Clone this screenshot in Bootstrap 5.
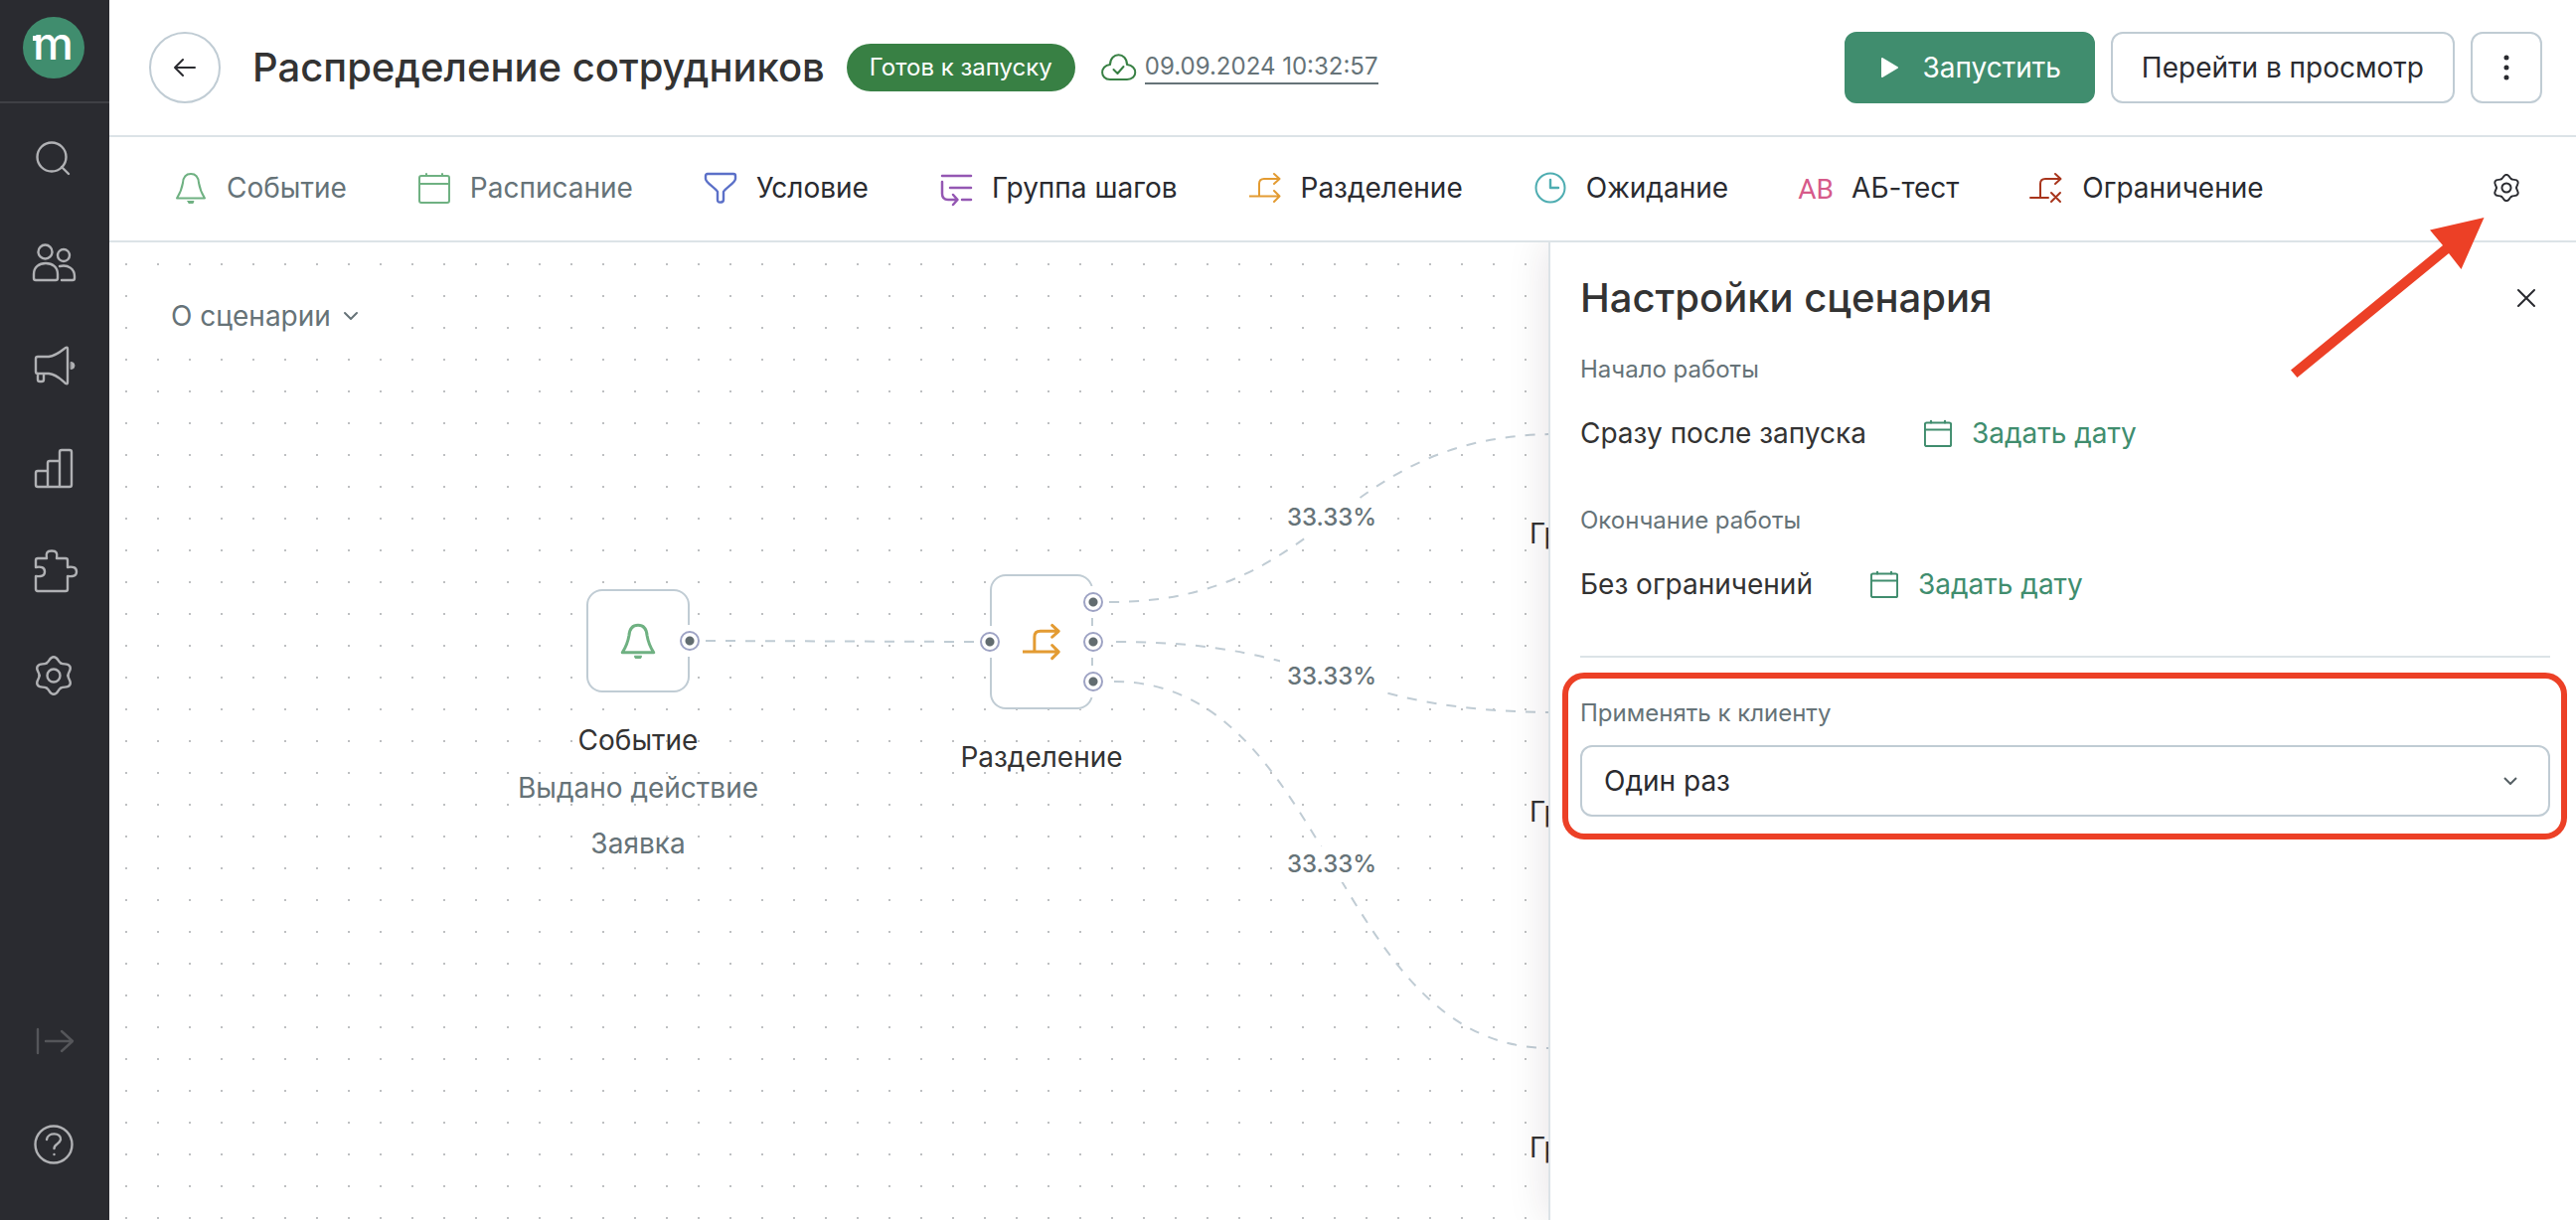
<!DOCTYPE html>
<html lang="ru">
<head>
<meta charset="utf-8">
<meta name="viewport" content="width=device-width, initial-scale=1">
<title>Распределение сотрудников</title>
<link href="https://cdn.jsdelivr.net/npm/bootstrap@5.3.0/dist/css/bootstrap.min.css" rel="stylesheet">
<style>
  :root { --ink:#2a2b30; --muted:#667378; --line:#dce3e7; --edge:#c0ccd4; --brand:#408d6e; --alert:#ec4026; }
  body { font-family: Inter, "Noto Sans", sans-serif; font-size: 28px; line-height: 40px; color: #333; background: #fff; }
  svg { fill: none; stroke: currentColor; stroke-width: 2; stroke-linecap: round; stroke-linejoin: round; overflow: visible; flex: none; display: block; }
  .rail { width: 110px; background: var(--ink); color: #b0b1b4; }
  .rail svg { stroke-width: 2.4; }
  .rail-logo { height: 104px; border-bottom: 2px solid #3f4045; padding: 16px 22px; }
  .rail-link { height: 104px; color: inherit; padding-right: 2px; }
  .rail-off { color: #55565a; }
  .rail-foot { padding-bottom: 24px; }
  .topbar { height: 138px; padding: 0 34px 0 40px; border-bottom: 2px solid var(--line); }
  .heading { font-size: 40px; line-height: 48px; font-weight: 500; margin: 0; }
  .tool { border: 0; background: none; padding: 0; border-radius: 12px; color: var(--ink); white-space: nowrap; }
  .btn-back, .btn-line, .btn-run { height: 72px; border: 2px solid var(--edge); border-radius: 12px; background: #fff; color: var(--ink); white-space: nowrap; }
  .btn-back { width: 72px; border-radius: 50%; margin-right: 32px; }
  .btn-line { padding: 0 29px; }
  .btn-more { width: 72px; padding: 0; }
  .btn-run { background: var(--brand); border-color: var(--brand); color: #fff; padding: 0 32px 0 34px; gap: 22px; }
  .state { background: #388044; color: #fff; font-size: 24px; line-height: 32px; padding: 8px 23px; border-radius: 24px; margin: 0 26px 0 22px; white-space: nowrap; }
  .saved { font-size: 24px; line-height: 32px; color: var(--muted); border-bottom: 2px solid var(--muted); text-decoration: none; white-space: nowrap; }
  .steps { height: 106px; padding: 0 56px 2px 66px; gap: 72px; border-bottom: 2px solid var(--line); }
  .steps .tool { gap: 20px; }
  .steps .tool.idle, .about { color: var(--muted); }
  .board { overflow: hidden; background: radial-gradient(circle at 1px 1px, #bec0c2 1px, transparent 1px) 16px 21px / 32px 32px; }
  .about { background: #fff; margin: 40px 0 0 32px; padding: 14px 30px; gap: 14px; border: 0; }
  .wires { left: 0; top: 0; color: var(--edge); stroke-dasharray: 10 10; stroke-linecap: butt; }
  .node { width: 300px; text-align: center; color: #333; }
  .node-box { width: 104px; height: 104px; margin: 0 auto 28px; box-shadow: inset 0 0 0 2px var(--edge); border-radius: 16px; background: #fff; }
  .node-tall { height: 136px; }
  .port { width: 32px; height: 32px; background: #fff; }
  .port::before { content: ""; width: 20px; height: 20px; border: 2px solid #9ea3c4; border-radius: 50%; background: radial-gradient(circle, #626c70 4px, transparent 5px); }
  .share { width: 104px; line-height: 36px; font-size: 24px; font-weight: 500; text-align: center; background: #fff; color: var(--muted); }
  .settings { width: 1034px; border-left: 2px solid var(--line); padding: 32px 26px 0 30px; background: #fff; box-shadow: 0 0 40px rgba(40,20,30,.12); clip-path: inset(0 0 0 -60px); }
  .hint { font-size: 24px; line-height: 32px; color: var(--muted); display: block; }
  .setting { margin-top: 28px; margin-bottom: 52px; gap: 58px; }
  .setting .tool { color: var(--brand); gap: 20px; }
  .rule { height: 2px; background: var(--line); margin-bottom: 40px; }
  .pick { height: 72px; border: 2px solid var(--edge); border-radius: 12px; font-size: 28px; line-height: 40px; color: var(--ink); margin-top: 16px; padding: 0 64px 0 22px;
    background-image: url("data:image/svg+xml,%3Csvg xmlns='http://www.w3.org/2000/svg' viewBox='0 0 14 8' fill='none' stroke='%23555f64' stroke-width='2'%3E%3Cpath d='M1 1l6 6 6-6'/%3E%3C/svg%3E"); background-size: 14px 8px; background-position: right 31px center; }
  .callout { left: -18px; right: -17px; top: -25px; bottom: -23px; border: 6px solid var(--alert); border-radius: 22px; pointer-events: none; }
  .pointer { right: 92px; top: 218px; fill: var(--alert); stroke: none; z-index: 5; pointer-events: none; }
</style>
<script src="https://cdn.jsdelivr.net/npm/bootstrap@5.3.0/dist/js/bootstrap.bundle.min.js"></script>
</head>
<body>
<svg class="d-none">
  <path id="cog" d="M-7.200-12.500C-4-14.300-4.200-18.800 0-18.800S4-14.300 7.200-12.500"/>
  <symbol id="gear" viewBox="-20 -20 40 40">
    <use href="#cog"/><use href="#cog" transform="rotate(60)"/><use href="#cog" transform="rotate(120)"/><use href="#cog" transform="rotate(180)"/><use href="#cog" transform="rotate(240)"/><use href="#cog" transform="rotate(300)"/><circle r="6.500"/>
  </symbol>
  <symbol id="bell" viewBox="0 0 32 32"><path d="M2 26.500C5.500 21 7 17 8 11 8.500 5 11 2 16 2s7.500 3 8 9c1 6 2.500 10 6 15.500z"/><path d="M13 29.500h6a3 2.500 0 0 1-6 0z" fill="currentColor" stroke-width="1"/></symbol>
  <symbol id="cal" viewBox="0 0 32 32"><rect x="1" y="4" width="30" height="27" rx="2"/><path d="M1 12h30M8 2v2M24 2v2"/></symbol>
  <symbol id="split" viewBox="0 0 32 32"><path d="M0 24.500H30M10 24.500V12q0-5 5-5H30M25 2l5.500 5-5.500 5M25 19l5.500 5.500-5.500 5.500"/></symbol>
</svg>
<div class="d-flex min-vh-100 position-relative">
  <nav class="rail d-flex flex-column flex-shrink-0" aria-label="Разделы">
    <a class="rail-logo mb-1" href="#" aria-label="Главная">
      <svg width="64" height="64" viewBox="0 0 64 64"><circle cx="32" cy="32" r="31" fill="#408d6e" stroke="none"/><text x="11" y="44" font-size="46" font-weight="500" fill="#fff" stroke="none">m</text><path d="M11 20h6v5h-6z" fill="#fff" stroke="none"/></svg>
    </a>
    <a class="rail-link d-flex align-items-center justify-content-center" href="#" aria-label="Поиск"><svg width="44" height="44" viewBox="32 138 44 44"><circle cx="52" cy="158" r="14.500"/><path d="M62 168l7 7"/></svg></a>
    <a class="rail-link d-flex align-items-center justify-content-center" href="#" aria-label="Клиенты"><svg width="44" height="44" viewBox="32 242 44 44"><circle cx="45.500" cy="253.500" r="7"/><path d="M34 280v-4c0-7 5-11 12-11s12 4 12 11v4q0 2-2 2H36q-2 0-2-2z"/><circle cx="64" cy="257" r="6"/><path d="M60 268c9-2 15 3 15 10v2q0 2-2 2H62"/></svg></a>
    <a class="rail-link d-flex align-items-center justify-content-center" href="#" aria-label="Кампании"><svg width="44" height="44" viewBox="32 346 44 44"><path d="M36 361q0-2 2-2h11c8-1 13-6 17-9q2-1 2 1v34q0 2-2 1c-4-3-8-9-17-10H38q-2 0-2-2zM38 377v5q0 2 2 2h2q2 0 2-2v-6"/><path d="M71.500 364.500a3.500 3.500 0 0 1 0 7z" fill="currentColor" stroke-width="1"/></svg></a>
    <a class="rail-link d-flex align-items-center justify-content-center" href="#" aria-label="Отчёты"><svg width="44" height="44" viewBox="32 450 44 44"><path d="M48 474H38q-2 0-2 2v12q0 2 2 2h32q2 0 2-2V455q0-2-2-2h-8q-2 0-2 2v35M60 464H50q-2 0-2 2v24"/></svg></a>
    <a class="rail-link d-flex align-items-center justify-content-center" href="#" aria-label="Интеграции"><svg width="44" height="44" viewBox="0 0 44 44"><path d="M6 8h9C14 3 15 .5 20 .5S26 3 25 8h9q2 0 2 2v7c5-1 9 0 9 4.500s-4 5-9 4.500v13q0 2-2 2H6q-2 0-2-2V26c5 .5 9 0 9-4.500s-4-5.500-9-4.500v-7q0-2 2-2z"/></svg></a>
    <a class="rail-link d-flex align-items-center justify-content-center" href="#" aria-label="Настройки"><svg width="40" height="40"><use href="#gear"/></svg></a>
    <div class="rail-foot mt-auto">
      <a class="rail-link rail-off d-flex align-items-center justify-content-center" href="#" aria-label="Развернуть меню"><svg width="44" height="44" viewBox="0 0 44 44"><path d="M6 10v24M14 22h26M30 12l11 10-11 10"/></svg></a>
      <a class="rail-link d-flex align-items-center justify-content-center" href="#" aria-label="Помощь"><svg width="44" height="44" viewBox="0 0 44 44"><circle cx="22" cy="22" r="18.500"/><path d="M15 17c1-8 15-7 14 0-1 5-6.500 4-6.500 9M22.500 32v.1"/></svg></a>
    </div>
  </nav>

  <div class="d-flex flex-column flex-grow-1" style="min-width:0">
    <header class="topbar d-flex align-items-center">
      <button type="button" class="btn-back d-flex align-items-center justify-content-center" aria-label="Назад"><svg width="22" height="18" viewBox="0 0 22 18"><path d="M21 9H1M9 1L1 9l8 8"/></svg></button>
      <h1 class="heading text-nowrap">Распределение сотрудников</h1>
      <span class="state">Готов к запуску</span>
      <svg class="me-2" width="36" height="28" viewBox="0 0 36 28" style="color:#388044"><path d="M9 26C-1.500 26-1.500 12 9 11 9-2 26-2 26 11 37 12 37 26 26 26zM12.500 16l4 4 6-7"/></svg>
      <a class="saved" href="#">09.09.2024 10:32:57</a>
      <div class="d-flex gap-3 ms-auto">
        <button type="button" class="btn-run d-flex align-items-center"><svg width="20" height="22" viewBox="0 0 20 22"><path d="M2 2l15 9-15 9z" fill="currentColor"/></svg>Запустить</button>
        <button type="button" class="btn-line">Перейти в просмотр</button>
        <button type="button" class="btn-line btn-more d-flex align-items-center justify-content-center" aria-label="Ещё"><svg width="6" height="26" viewBox="0 0 6 26"><path d="M3 3v.1M3 13v.1M3 23v.1" stroke-width="5"/></svg></button>
      </div>
    </header>

    <div class="steps d-flex align-items-center" role="toolbar" aria-label="Шаги сценария">
      <button type="button" class="tool idle d-flex align-items-center"><svg width="32" height="32" style="color:#6fb182"><use href="#bell"/></svg>Событие</button>
      <button type="button" class="tool idle d-flex align-items-center"><svg width="32" height="32" style="color:#6fb182"><use href="#cal"/></svg>Расписание</button>
      <button type="button" class="tool d-flex align-items-center"><svg width="32" height="32" viewBox="0 0 32 32" style="color:#5b70c8"><path stroke-width="2.400" d="M3 2h26q2 0 2 2v3c0 4-10 9-12 13v8q0 2-2 2.500h-1q-3 .5-3-2.500v-8C11 16 1 11 1 7V4q0-2 2-2z"/></svg>Условие</button>
      <button type="button" class="tool d-flex align-items-center"><svg width="32" height="32" viewBox="0 0 32 32" style="color:#9457b3"><path d="M2 4h29M10 16h21M22 28h9M2 10v12q0 6 6 6h9M13 23l4.500 5-4.500 5" stroke-width="2.500"/></svg>Группа шагов</button>
      <button type="button" class="tool d-flex align-items-center"><svg width="32" height="32" style="color:#e39b32"><use href="#split"/></svg>Разделение</button>
      <button type="button" class="tool d-flex align-items-center"><svg width="32" height="32" viewBox="0 0 32 32" style="color:#4eadb1"><circle cx="16" cy="16" r="14.500"/><path d="M16 8v8h8" stroke-width="2.400"/></svg>Ожидание</button>
      <button type="button" class="tool d-flex align-items-center"><svg width="32" height="32" viewBox="0 0 32 32" style="color:#d65a8a"><text x="16" y="27" font-family="Liberation Sans Narrow, Roboto, sans-serif" font-size="28" fill="currentColor" stroke="none" text-anchor="middle">AB</text></svg>АБ-тест</button>
      <button type="button" class="tool d-flex align-items-center"><svg width="32" height="32" viewBox="0 0 32 32" style="color:#a8351c"><path d="M0 26h18M10 26V12q0-5 5-5H30M25 2l5.500 5-5.500 5M21 21l9 9M30 21l-9 9"/></svg>Ограничение</button>
      <button type="button" class="tool ms-auto" aria-label="Настройки сценария"><svg width="28" height="28"><use href="#gear" stroke-width="2.800"/></svg></button>
    </div>

    <main class="d-flex flex-grow-1">
      <section class="board position-relative flex-grow-1" aria-label="Схема сценария">
        <button type="button" class="about d-inline-flex align-items-center">О сценарии<svg width="12" height="8" viewBox="0 0 12 8"><path d="M0 1l6 6 6-6"/></svg></button>

        <svg class="wires position-absolute" width="1448" height="984" viewBox="110 244 1448 984">
          <path d="M710 645L980 646"/>
          <path d="M1116 606C1340 606 1340 437 1568 437"/>
          <path d="M1123 646C1340 646 1340 717 1568 717"/>
          <path d="M1121 686C1340 686 1340 1055 1560 1055"/>
        </svg>

        <div class="node position-absolute" style="left:382px;top:349px">
          <div class="node-box position-relative d-flex align-items-center justify-content-center">
            <svg width="36" height="36" style="color:#6fb182"><use href="#bell" stroke-width="2.700"/></svg>
            <span class="port position-absolute top-50 start-100 translate-middle d-flex align-items-center justify-content-center"></span>
          </div>
          <div>Событие</div>
          <div class="mt-2" style="color:var(--muted)">Выдано действие</div>
          <div class="mt-3" style="color:var(--muted)">Заявка</div>
        </div>

        <div class="node position-absolute" style="left:788px;top:334px">
          <div class="node-box node-tall position-relative d-flex align-items-center justify-content-center">
            <svg width="38" height="38" style="color:#e39b32"><use href="#split" stroke-width="2.500"/></svg>
            <span class="port position-absolute top-50 start-0 translate-middle d-flex align-items-center justify-content-center"></span>
            <div class="position-absolute top-50 start-100 translate-middle d-flex flex-column gap-2">
              <span class="port d-flex align-items-center justify-content-center"></span>
              <span class="port d-flex align-items-center justify-content-center"></span>
              <span class="port d-flex align-items-center justify-content-center"></span>
            </div>
          </div>
          <div>Разделение</div>
        </div>

        <span class="share position-absolute" style="left:1178px;top:259px">33.33%</span>
        <span class="share position-absolute" style="left:1178px;top:419px">33.33%</span>
        <span class="share position-absolute" style="left:1178px;top:608px">33.33%</span>

        <span class="position-absolute text-nowrap" style="left:1429px;top:273px">Группа шагов</span>
        <span class="position-absolute text-nowrap" style="left:1429px;top:553px">Группа шагов</span>
        <span class="position-absolute text-nowrap" style="left:1429px;top:891px">Группа шагов</span>
      </section>

      <aside class="settings position-relative flex-shrink-0">
        <div class="d-flex align-items-center justify-content-between mb-4 pb-2">
          <h2 class="heading">Настройки сценария</h2>
          <button type="button" class="tool me-3" aria-label="Закрыть"><svg width="16" height="16" viewBox="0 0 16 16"><path d="M0 0l16 16M16 0L0 16"/></svg></button>
        </div>
        <span class="hint">Начало работы</span>
        <div class="setting d-flex">Сразу после запуска<button type="button" class="tool d-flex align-items-center"><svg width="28" height="28"><use href="#cal" stroke-width="2.400"/></svg>Задать дату</button></div>
        <span class="hint">Окончание работы</span>
        <div class="setting d-flex">Без ограничений<button type="button" class="tool d-flex align-items-center"><svg width="28" height="28"><use href="#cal" stroke-width="2.400"/></svg>Задать дату</button></div>
        <div class="rule"></div>
        <div class="position-relative">
          <label class="hint" for="apply">Применять к клиенту</label>
          <select class="form-select pick" id="apply"><option>Один раз</option></select>
          <div class="callout position-absolute"></div>
        </div>
      </aside>
    </main>
  </div>
  <svg class="pointer position-absolute" width="196" height="164" viewBox="2304 218 196 164"><path d="M2499.500 219L2445 231.500l13 15.500L2305 372.500l6.500 7.500 152.500-125 12.500 16z"/></svg>
</div>
</body>
</html>
